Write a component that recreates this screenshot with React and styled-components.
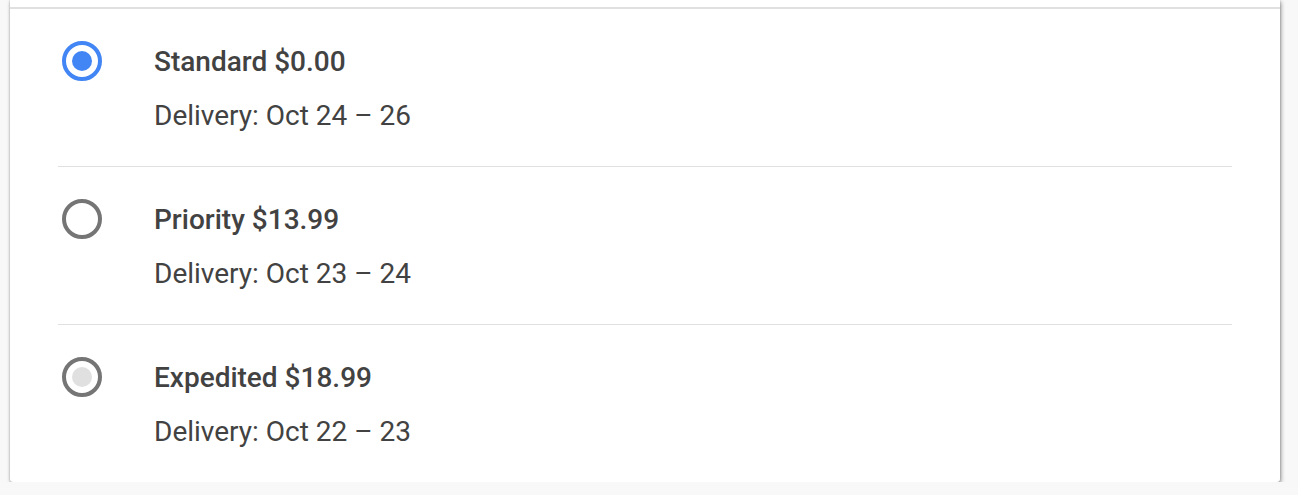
import React from 'react'
import styled, { createGlobalStyle } from 'styled-components'

const FundoPagina = createGlobalStyle`
body {
    margin: 0;
    background-color: #f8f8f8;
    font-family: Roboto, "Liberation Sans", Arial, sans-serif;
}
`

const Cartao = styled.div`
margin-left: 10px;
width: 1270px;
background-color: #ffffff;
box-shadow: 1px 2px 4px rgba(0, 0, 0, 0.4), 0 0 2px rgba(0, 0, 0, 0.25);
border-radius: 0 0 3px 3px;
`

const Topo = styled.div`
height: 7px;
border-bottom: 2px solid #e0e0e0;
`

const Lista = styled.ul`
list-style: none;
margin: 0;
padding: 0 48px;
`

const ItemLista = styled.li`
display: flex;
align-items: flex-start;
padding: 32px 0 30px;
border-top: ${(p) => (p.primeiro ? 'none' : '1px solid #e0e0e0')};
`

const Radio = styled.span`
box-sizing: border-box;
flex: 0 0 40px;
width: 40px;
height: 40px;
margin-left: 4px;
margin-right: 52px;
border-radius: 50%;
border: 4px solid ${(p) => (p.marcado ? '#4285f4' : '#757575')};
display: flex;
align-items: center;
justify-content: center;

&::after {
    content: '';
    width: 20px;
    height: 20px;
    border-radius: 50%;
    background-color: ${(p) => (p.marcado ? '#4285f4' : p.foco ? '#e0e0e0' : 'transparent')};
}
`

const Textos = styled.div`
display: flex;
flex-direction: column;
margin-top: 1px;
color: #424242;
font-size: 28px;
`

const Titulo = styled.span`
line-height: 40px;
font-weight: 500;
`

const Entrega = styled.span`
line-height: 40px;
margin-top: 14px;
font-weight: 400;
`

const opcoes = [
    { id: 'standard', nome: 'Standard $0.00', entrega: 'Delivery: Oct 24 – 26', marcado: true },
    { id: 'priority', nome: 'Priority $13.99', entrega: 'Delivery: Oct 23 – 24' },
    { id: 'expedited', nome: 'Expedited $18.99', entrega: 'Delivery: Oct 22 – 23', foco: true },
]

export default function App() {
    return (
        <>
            <FundoPagina />
            <Cartao>
                <Topo />
                <Lista>
                    {opcoes.map((opcao, i) => (
                        <ItemLista key={opcao.id} primeiro={i === 0}>
                            <Radio marcado={opcao.marcado} foco={opcao.foco} />
                            <Textos>
                                <Titulo>{opcao.nome}</Titulo>
                                <Entrega>{opcao.entrega}</Entrega>
                            </Textos>
                        </ItemLista>
                    ))}
                </Lista>
            </Cartao>
        </>
    )
}
